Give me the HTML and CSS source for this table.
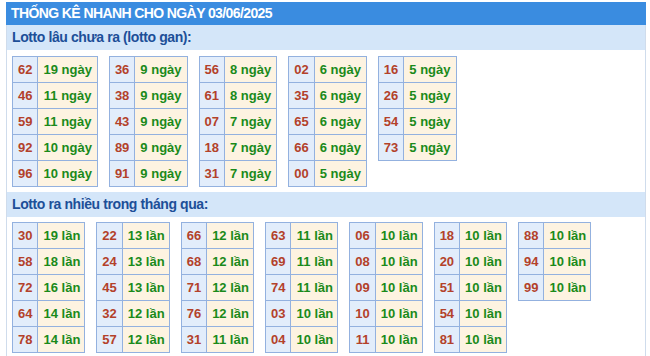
FILE: index.html
```html
<!DOCTYPE html>
<html lang="vi">
<head>
<meta charset="utf-8">
<title>Thống kê nhanh</title>
<link rel="stylesheet" href="styles.css">
</head>
<body>
<div class="box">
  <div class="title">THỐNG KÊ NHANH CHO NGÀY 03/06/2025</div>
  <div class="sub">Lotto lâu chưa ra (lotto gan):</div>
  <div class="tables first">
    <table><tr><td class="n">62</td><td class="v">19 ngày</td></tr><tr><td class="n">46</td><td class="v">11 ngày</td></tr><tr><td class="n">59</td><td class="v">11 ngày</td></tr><tr><td class="n">92</td><td class="v">10 ngày</td></tr><tr><td class="n">96</td><td class="v">10 ngày</td></tr></table>
    <table><tr><td class="n">36</td><td class="v">9 ngày</td></tr><tr><td class="n">38</td><td class="v">9 ngày</td></tr><tr><td class="n">43</td><td class="v">9 ngày</td></tr><tr><td class="n">89</td><td class="v">9 ngày</td></tr><tr><td class="n">91</td><td class="v">9 ngày</td></tr></table>
    <table><tr><td class="n">56</td><td class="v">8 ngày</td></tr><tr><td class="n">61</td><td class="v">8 ngày</td></tr><tr><td class="n">07</td><td class="v">7 ngày</td></tr><tr><td class="n">18</td><td class="v">7 ngày</td></tr><tr><td class="n">31</td><td class="v">7 ngày</td></tr></table>
    <table><tr><td class="n">02</td><td class="v">6 ngày</td></tr><tr><td class="n">35</td><td class="v">6 ngày</td></tr><tr><td class="n">65</td><td class="v">6 ngày</td></tr><tr><td class="n">66</td><td class="v">6 ngày</td></tr><tr><td class="n">00</td><td class="v">5 ngày</td></tr></table>
    <table><tr><td class="n">16</td><td class="v">5 ngày</td></tr><tr><td class="n">26</td><td class="v">5 ngày</td></tr><tr><td class="n">54</td><td class="v">5 ngày</td></tr><tr><td class="n">73</td><td class="v">5 ngày</td></tr></table>
  </div>
  <div class="sub">Lotto ra nhiều trong tháng qua:</div>
  <div class="tables second">
    <table><tr><td class="n">30</td><td class="v">19 lần</td></tr><tr><td class="n">58</td><td class="v">18 lần</td></tr><tr><td class="n">72</td><td class="v">16 lần</td></tr><tr><td class="n">64</td><td class="v">14 lần</td></tr><tr><td class="n">78</td><td class="v">14 lần</td></tr></table>
    <table><tr><td class="n">22</td><td class="v">13 lần</td></tr><tr><td class="n">24</td><td class="v">13 lần</td></tr><tr><td class="n">45</td><td class="v">13 lần</td></tr><tr><td class="n">32</td><td class="v">12 lần</td></tr><tr><td class="n">57</td><td class="v">12 lần</td></tr></table>
    <table><tr><td class="n">66</td><td class="v">12 lần</td></tr><tr><td class="n">68</td><td class="v">12 lần</td></tr><tr><td class="n">71</td><td class="v">12 lần</td></tr><tr><td class="n">76</td><td class="v">12 lần</td></tr><tr><td class="n">31</td><td class="v">11 lần</td></tr></table>
    <table><tr><td class="n">63</td><td class="v">11 lần</td></tr><tr><td class="n">69</td><td class="v">11 lần</td></tr><tr><td class="n">74</td><td class="v">11 lần</td></tr><tr><td class="n">03</td><td class="v">10 lần</td></tr><tr><td class="n">04</td><td class="v">10 lần</td></tr></table>
    <table><tr><td class="n">06</td><td class="v">10 lần</td></tr><tr><td class="n">08</td><td class="v">10 lần</td></tr><tr><td class="n">09</td><td class="v">10 lần</td></tr><tr><td class="n">10</td><td class="v">10 lần</td></tr><tr><td class="n">11</td><td class="v">10 lần</td></tr></table>
    <table><tr><td class="n">18</td><td class="v">10 lần</td></tr><tr><td class="n">20</td><td class="v">10 lần</td></tr><tr><td class="n">51</td><td class="v">10 lần</td></tr><tr><td class="n">54</td><td class="v">10 lần</td></tr><tr><td class="n">81</td><td class="v">10 lần</td></tr></table>
    <table><tr><td class="n">88</td><td class="v">10 lần</td></tr><tr><td class="n">94</td><td class="v">10 lần</td></tr><tr><td class="n">99</td><td class="v">10 lần</td></tr></table>
  </div>
</div>
</body>
</html>
```

FILE: styles.css
```css
html, body {
  margin: 0;
  padding: 0;
  background: #ffffff;
}
body {
  padding: 2px 4px 0 6px;
  font-family: "Liberation Sans", Arial, sans-serif;
}
.box {
  border-left: 1px solid #cfdcec;
  border-right: 1px solid #cfdcec;
  width: 638px;
  min-height: 360px;
}
.title {
  background: #3a8ce0;
  color: #ffffff;
  font-weight: bold;
  font-size: 14px;
  letter-spacing: -0.6px;
  height: 23px;
  line-height: 23px;
  padding-left: 5px;
  margin-left: -1px;
  margin-right: -1px;
}
.sub {
  background: #d4e6f9;
  color: #1d4f98;
  font-size: 14px;
  font-weight: bold;
  letter-spacing: -0.4px;
  height: 25px;
  line-height: 25px;
  padding-left: 5px;
}
.tables {
  display: flex;
  align-items: flex-start;
  gap: 11px;
  padding-left: 5px;
}
.first {
  padding-top: 6px;
  padding-bottom: 5px;
}
.second {
  padding-top: 5px;
}
.second td.v {
  padding: 0 4px 0 5px;
}
table {
  border-collapse: collapse;
}
td {
  border: 1px solid #93b1df;
  height: 25px;
  padding: 0 5px;
  font-size: 13px;
  font-weight: bold;
  text-align: center;
  white-space: nowrap;
}
td.n {
  background: #e2edfb;
  color: #b3412a;
}
td.v {
  background: #fdf3e1;
  color: #1a8a1a;
}
```
